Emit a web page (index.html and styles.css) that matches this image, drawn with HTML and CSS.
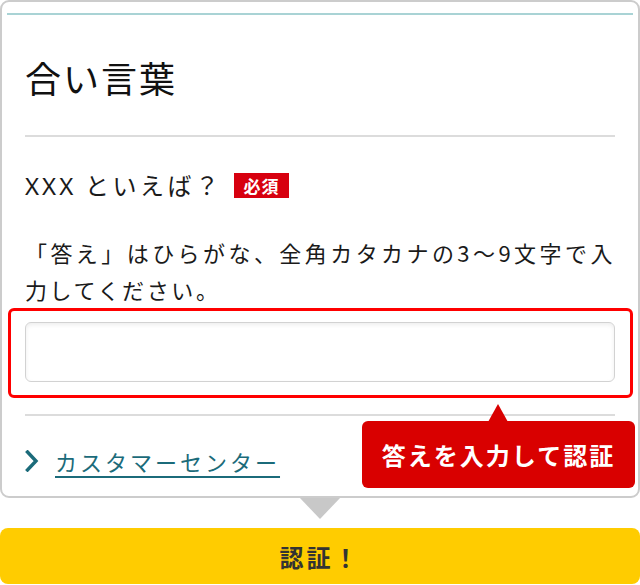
FILE: index.html
```html
<!DOCTYPE html>
<html lang="ja">
<head>
<meta charset="utf-8">
<title>合い言葉</title>
<link rel="stylesheet" href="styles.css">
</head>
<body>
<div class="page">
  <section class="card">
    <div class="accent"></div>
    <h1 class="title">合い言葉</h1>
    <hr class="rule">
    <div class="question">
      <span class="q-text"><span class="latin">XXX</span> といえば？</span>
      <span class="badge">必須</span>
    </div>
    <p class="desc">「答え」はひらがな、全角カタカナの3〜9文字で入力してください。</p>
    <div class="field-wrap">
      <input class="field" type="text" aria-label="答え">
    </div>
    <hr class="rule rule-bottom">
    <div class="link-row">
      <svg class="chevron" width="14" height="22" viewBox="0 0 14 22" aria-hidden="true">
        <polyline points="2.5,2 11,11 2.5,20" fill="none" stroke="#1b6b7a" stroke-width="3.4" stroke-linecap="square" stroke-linejoin="miter"/>
      </svg>
      <a class="link" href="#">カスタマーセンター</a>
    </div>
    <div class="tooltip">答えを入力して認証</div>
  </section>
  <div class="pointer"></div>
  <button class="submit" type="button">認証！</button>
</div>
</body>
</html>
```

FILE: styles.css
```css
* { box-sizing: border-box; }

html, body {
  margin: 0;
  padding: 0;
  background: #fff;
}

body {
  font-family: "Noto Sans CJK JP", "Noto Sans", sans-serif;
  color: #1a1a1a;
  width: 640px;
  overflow: hidden;
}

.page {
  width: 640px;
}

.card {
  position: relative;
  width: 640px;
  border: 2px solid #cccccc;
  border-radius: 9px;
  padding: 11px 23px 19px;
}

.accent {
  height: 2px;
  background: #a9d3d5;
  margin: 0 -18px;
}

.title {
  margin: 35px 0 31px;
  font-size: 36px;
  line-height: 54px;
  font-weight: 400;
  letter-spacing: 2px;
  color: #111;
}

.rule {
  border: 0;
  height: 2px;
  background: #dcdcdc;
  margin: 0;
}

.question {
  display: flex;
  align-items: center;
  margin-top: 32px;
  height: 32px;
}

.q-text {
  font-size: 24px;
  line-height: 32px;
  letter-spacing: 3.5px;
}

.latin {
  font-family: "Noto Sans", sans-serif;
  letter-spacing: 3px;
}

.badge {
  margin-left: 11px;
  background: #d7000f;
  color: #fff;
  font-weight: 700;
  font-size: 17px;
  line-height: 25px;
  height: 25px;
  padding: 0 9px 0 10px;
  letter-spacing: 1px;
}

.desc {
  margin: 33px 0 0;
  font-size: 22px;
  line-height: 37px;
  letter-spacing: 2.6px;
  text-align: justify;
}

.field-wrap {
  margin: 0 -18px 0 -17px;
  border: 3px solid #ff0000;
  border-radius: 6px;
  padding: 11px 15px 13px 14px;
}

.field {
  display: block;
  width: 100%;
  height: 60px;
  border: 1px solid #d2d2d2;
  border-radius: 6px;
  background: #fff;
  box-shadow: inset 0 2px 4px rgba(0, 0, 0, 0.07);
  font: inherit;
  outline: none;
}

.rule-bottom {
  margin-top: 16px;
}

.link-row {
  display: flex;
  align-items: center;
  gap: 16px;
  margin-top: 29px;
  height: 32px;
}

.chevron {
  display: block;
  flex: none;
}

.link {
  font-size: 22px;
  line-height: 32px;
  letter-spacing: 3px;
  color: #1b6b7a;
  text-decoration: underline;
  text-decoration-thickness: 2px;
  text-underline-offset: 5px;
}

.tooltip {
  position: absolute;
  left: 360px;
  top: 419px;
  width: 273px;
  height: 67px;
  background: #d90000;
  border-radius: 6px;
  color: #fff;
  font-weight: 700;
  font-size: 24px;
  letter-spacing: 2px;
  display: flex;
  align-items: center;
  justify-content: center;
}

.tooltip::before {
  content: "";
  position: absolute;
  left: 126px;
  top: -17px;
  border-left: 10px solid transparent;
  border-right: 10px solid transparent;
  border-bottom: 18px solid #d90000;
}

.pointer {
  width: 0;
  height: 0;
  margin: -1px auto 0;
  border-left: 21px solid transparent;
  border-right: 21px solid transparent;
  border-top: 22px solid #c8c8c8;
}

.submit {
  display: block;
  width: 640px;
  height: 56px;
  margin: 9px 0 0;
  border: 0;
  border-radius: 8px;
  background: #ffcc00;
  color: #333;
  font-family: inherit;
  font-weight: 700;
  font-size: 24px;
  letter-spacing: 3px;
  padding: 0;
}
```
